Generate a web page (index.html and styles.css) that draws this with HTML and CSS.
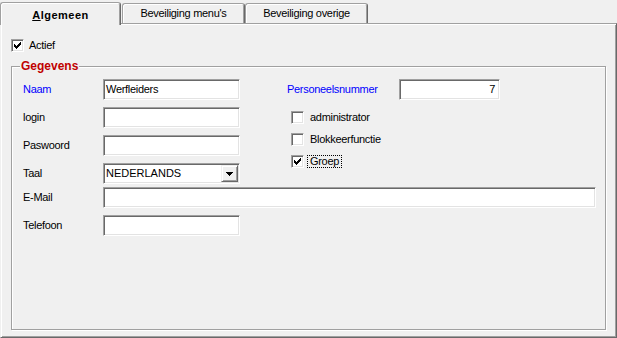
FILE: index.html
```html
<!DOCTYPE html>
<html lang="nl">
<head>
<meta charset="utf-8">
<title>Gebruiker</title>
<link rel="stylesheet" href="styles.css">
</head>
<body>
<div class="window">
  <div class="tabs">
    <div class="tab active"><span class="acc">A</span>lgemeen</div>
    <div class="tab">Beveiliging menu's</div>
    <div class="tab">Beveiliging overige</div>
  </div>
  <div class="panel">
    <div class="check">
      <span class="box"><svg width="7" height="7" viewBox="0 0 7 7" shape-rendering="crispEdges"><path d="M6 0h1v1h-1zM5 1h2v1h-2zM0 2h1v1h-1zM4 2h3v1h-3zM0 3h2v1h-2zM3 3h3v1h-3zM0 4h5v1h-5zM1 5h3v1h-3zM2 6h1v1h-1z" fill="#000"/></svg></span>
      <span class="ctext">Actief</span>
    </div>
    <div class="group">
      <div class="group-title">Gegevens</div>
      <div class="group-body">
        <div class="cols">
          <div class="col-left">
            <div class="row"><span class="lbl blue">Naam</span><div class="edit w137">Werfleiders</div></div>
            <div class="row"><span class="lbl">login</span><div class="edit w137"></div></div>
            <div class="row"><span class="lbl">Paswoord</span><div class="edit w137"></div></div>
            <div class="row"><span class="lbl">Taal</span>
              <div class="edit w137 combo"><span class="combo-text">NEDERLANDS</span><span class="btn"><svg width="7" height="4" viewBox="0 0 7 4" shape-rendering="crispEdges"><path d="M0 0h7v1h-7zM1 1h5v1h-5zM2 2h3v1h-3zM3 3h1v1h-1z" fill="#000"/></svg></span></div>
            </div>
          </div>
          <div class="col-right">
            <div class="row"><span class="lbl lbl-wide blue">Personeelsnummer</span><div class="edit num">7</div></div>
            <div class="checks">
              <div class="check"><span class="box"></span><span class="ctext">administrator</span></div>
              <div class="check"><span class="box"></span><span class="ctext">Blokkeerfunctie</span></div>
              <div class="check"><span class="box"><svg width="7" height="7" viewBox="0 0 7 7" shape-rendering="crispEdges"><path d="M6 0h1v1h-1zM5 1h2v1h-2zM0 2h1v1h-1zM4 2h3v1h-3zM0 3h2v1h-2zM3 3h3v1h-3zM0 4h5v1h-5zM1 5h3v1h-3zM2 6h1v1h-1z" fill="#000"/></svg></span><span class="ctext focus">Groep</span></div>
            </div>
          </div>
        </div>
        <div class="row row-mail"><span class="lbl">E-Mail</span><div class="edit w493"></div></div>
        <div class="row row-tel"><span class="lbl">Telefoon</span><div class="edit w137"></div></div>
      </div>
    </div>
  </div>
</div>
</body>
</html>
```

FILE: styles.css
```css
* { box-sizing: border-box; }
html, body { margin: 0; padding: 0; background: #f0f0f0; }
body {
  font-family: "Liberation Sans", Arial, sans-serif;
  font-size: 11px;
  letter-spacing: -0.3px;
  color: #000;
}
.window {
  width: 617px;
  height: 338px;
  background: #f0f0f0;
  overflow: hidden;
}
.tabs {
  display: flex;
  align-items: flex-end;
  height: 23px;
}
.tab {
  height: 20px;
  width: 123px;
  padding-top: 3px;
  line-height: 13px;
  text-align: center;
  white-space: nowrap;
  border: 1px solid #a0a0a0;
  border-bottom: none;
  border-right-color: #696969;
  border-radius: 3px 3px 0 0;
  box-shadow: inset 1px 1px 0 #fff, inset -1px 0 0 #a0a0a0;
  background: #f0f0f0;
}
.tab.active {
  position: relative;
  z-index: 1;
  width: 121px;
  height: 23px;
  margin-bottom: -2px;
  margin-right: 1px;
  padding-top: 6px;
  font-weight: bold;
  letter-spacing: 0.5px;
}
.acc { text-decoration: underline; }
.panel {
  width: 617px;
  height: 315px;
  padding: 15px 0 0 10px;
  border-top: 1px solid #a0a0a0;
  border-left: 1px solid #f0f0f0;
  border-right: 1px solid #696969;
  border-bottom: 1px solid #696969;
  box-shadow: inset 1px 1px 0 #fff, inset -1px -1px 0 #a0a0a0;
}
.check {
  display: flex;
  align-items: flex-start;
  height: 13px;
}
.box {
  flex: none;
  width: 13px;
  height: 13px;
  background: #fff;
  border: 1px solid;
  border-color: #a0a0a0 #fff #fff #a0a0a0;
  box-shadow: inset 1px 1px 0 #696969, inset -1px -1px 0 #e3e3e3;
  padding: 2px 0 0 2px;
  line-height: 0;
}
.box svg { display: block; }
.ctext {
  margin-left: 2px;
  padding: 0 2px;
  border: 1px solid transparent;
  line-height: 11px;
  white-space: nowrap;
}
.checks .ctext { margin-left: 3px; }
.ctext.focus { border: 1px dotted #000; }
.group {
  width: 595px;
  height: 264px;
  margin-top: 14px;
  border: 1px solid #a0a0a0;
  box-shadow: inset 1px 1px 0 #fff, 1px 1px 0 #fff;
}
.group-title {
  width: fit-content;
  margin: -8px 0 0 8px;
  padding: 0 1px;
  background: #f0f0f0;
  color: #c00000;
  font-weight: bold;
  font-size: 12px;
  line-height: 14px;
  letter-spacing: 0;
}
.group-body {
  padding: 6px 0 0 11px;
}
.cols { display: flex; }
.col-left {
  display: flex;
  flex-direction: column;
  gap: 7px;
  width: 217px;
}
.col-right {
  margin-left: 47px;
}
.row {
  display: flex;
  align-items: center;
  height: 21px;
}
.lbl {
  width: 80px;
  flex: none;
  line-height: 21px;
  white-space: nowrap;
}
.lbl-wide { width: 112px; }
.blue { color: #0000ff; }
.edit {
  height: 21px;
  background: #fff;
  border: 1px solid;
  border-color: #a0a0a0 #fff #fff #a0a0a0;
  box-shadow: inset 1px 1px 0 #696969, inset -1px -1px 0 #e3e3e3;
  padding: 1px 3px 0 2px;
  line-height: 17px;
  white-space: nowrap;
}
.w137 { width: 137px; }
.w493 { width: 493px; }
.num { width: 101px; text-align: right; padding-right: 4px; }
.combo {
  display: flex;
  align-items: center;
  padding: 1px 1px 1px 2px;
}
.combo-text { flex: 1; line-height: 17px; letter-spacing: 0; }
.btn {
  width: 17px;
  height: 17px;
  display: flex;
  align-items: center;
  justify-content: center;
  background: #f0f0f0;
  border: 1px solid;
  border-color: #f0f0f0 #696969 #696969 #f0f0f0;
  box-shadow: inset 1px 1px 0 #fff, inset -1px -1px 0 #a0a0a0;
}
.btn svg { display: block; margin-top: 1px; }
.checks {
  display: flex;
  flex-direction: column;
  gap: 9px;
  margin: 11px 0 0 4px;
}
.row-mail { margin-top: 3px; }
.row-tel { margin-top: 7px; }
```
